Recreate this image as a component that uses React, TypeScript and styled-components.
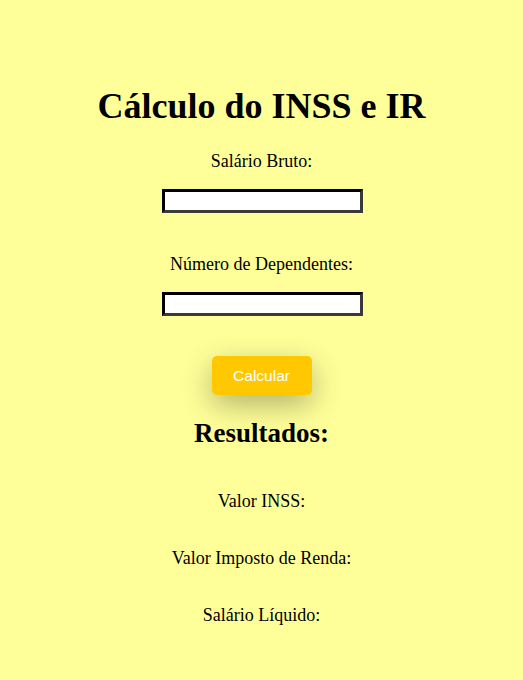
import React from "react";
import styled, { createGlobalStyle } from "styled-components";

const Global = createGlobalStyle`
  html, body { margin: 0; padding: 0; background: #ffff99; }
  body { font-family: "Liberation Serif", "Times New Roman", serif; color: #000; }
`;

const Page = styled.main`
  display: flex;
  flex-direction: column;
  align-items: center;
  padding-top: 86px;
  min-height: 680px;
  box-sizing: border-box;
`;

const Title = styled.h1`
  margin: 0 0 24px;
  font-size: 36px;
  line-height: 41px;
  font-weight: bold;
`;

const Field = styled.div<{ $gap: number }>`
  display: flex;
  flex-direction: column;
  align-items: center;
  margin-bottom: ${(p) => p.$gap}px;
`;

const Label = styled.label`
  font-size: 18px;
  line-height: 21px;
  margin-bottom: 17px;
`;

const Input = styled.input`
  width: 201px;
  height: 24px;
  box-sizing: border-box;
  border-style: solid;
  border-width: 3px;
  border-color: #000 #3a3a3a #3a3a3a #000;
  background: #fff;
  padding: 0 4px;
  margin: 0 0 0 1px;
  outline: none;
`;

const Button = styled.button`
  width: 100px;
  height: 39px;
  border: none;
  border-radius: 5px;
  background: #ffc800;
  color: #fff;
  font-family: "Liberation Sans", Arial, sans-serif;
  font-size: 15.5px;
  box-shadow: 0 10px 30px rgba(0, 0, 0, 0.3);
  cursor: pointer;
  margin-bottom: 23px;
`;

const Subtitle = styled.h2`
  margin: 0 0 42px;
  font-size: 27px;
  line-height: 31px;
  font-weight: bold;
`;

const Result = styled.p`
  margin: 0 0 36px;
  font-size: 18px;
  line-height: 21px;
`;

export default function App() {
  return (
    <>
      <Global />
      <Page>
        <Title>Cálculo do INSS e IR</Title>
        <Field $gap={41}>
          <Label htmlFor="salario">Salário Bruto:</Label>
          <Input id="salario" type="text" />
        </Field>
        <Field $gap={40}>
          <Label htmlFor="dep">Número de Dependentes:</Label>
          <Input id="dep" type="text" />
        </Field>
        <Button>Calcular</Button>
        <Subtitle>Resultados:</Subtitle>
        <Result>Valor INSS:</Result>
        <Result>Valor Imposto de Renda:</Result>
        <Result>Salário Líquido:</Result>
      </Page>
    </>
  );
}
